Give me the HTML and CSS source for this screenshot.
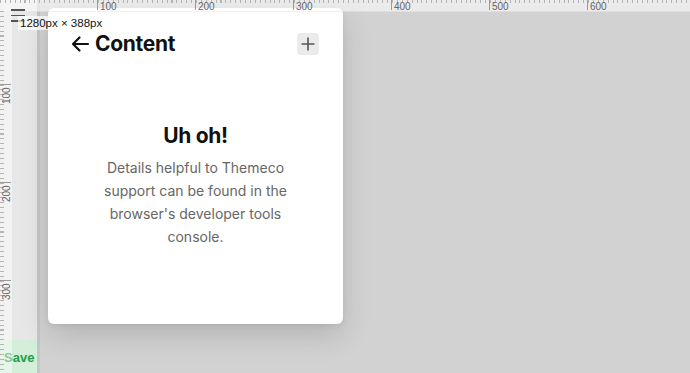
FILE: index.html
```html
<!DOCTYPE html>
<html lang="en">
<head>
    <meta charset="UTF-8">
    <meta name="viewport" content="width=device-width, initial-scale=1.0">
    <title>Content</title>
    <link rel="stylesheet" href="styles.css">
</head>
<body>
    <div class="sidebar">
        <div class="save">Save</div>
    </div>

    <div class="canvas">
        <div class="card">
            <div class="card-header">
                <h1 class="card-title">
                    <svg class="back" width="20" height="18" viewBox="0 0 20 18">
                        <path d="M18 9H3M9.5 2.5L3 9l6.5 6.5" fill="none" stroke="#111" stroke-width="2.2" stroke-linecap="round" stroke-linejoin="round"/>
                    </svg>
                    Content
                </h1>
                <button class="add-btn" aria-label="Add">
                    <svg width="14" height="14" viewBox="0 0 14 14">
                        <path d="M7 0.5v13M0.5 7h13" stroke="#555" stroke-width="1.6"/>
                    </svg>
                </button>
            </div>

            <div class="error">
                <h2>Uh oh!</h2>
                <p>Details helpful to Themeco support can be found in the browser's developer tools console.</p>
            </div>
        </div>
    </div>

    <!-- rulers sit over everything -->
    <div class="ruler-top">
        <span style="left: 97px">100</span>
        <span style="left: 195px">200</span>
        <span style="left: 293px">300</span>
        <span style="left: 391px">400</span>
        <span style="left: 489px">500</span>
        <span style="left: 587px">600</span>
    </div>
    <div class="ruler-left">
        <span style="top: 92px">100</span>
        <span style="top: 190px">200</span>
        <span style="top: 288px">300</span>
    </div>

    <div class="menu-icon">
        <i></i><i></i><i></i>
    </div>
    <div class="size-label">1280px × 388px</div>
</body>
</html>
```

FILE: styles.css
```css
body {
    margin: 0;
    height: 373px;
    overflow: hidden;
    display: flex;
    font-family: Inter, 'Liberation Sans', sans-serif;
    background-color: #d2d2d2;
}

.sidebar {
    width: 37px;
    flex-shrink: 0;
    background-color: #e7e7e7;
    border-right: 3px solid #c6c6c6;
    display: flex;
    flex-direction: column;
    justify-content: flex-end;
}

.save {
    height: 33px;
    background-color: #d3efda;
    color: #1e9e46;
    font-family: 'Liberation Sans', sans-serif;
    font-weight: bold;
    font-size: 13px;
    line-height: 36px;
    padding-left: 4px;
}

.canvas {
    flex: 1;
    padding: 8px 0 0 8px;
    background-color: #d2d2d2;
}

.card {
    width: 295px;
    height: 316px;
    background-color: white;
    border-radius: 6px;
    box-shadow: 0 12px 30px rgba(0, 0, 0, 0.14), 0 2px 6px rgba(0, 0, 0, 0.06);
    box-sizing: border-box;
    padding: 24px 24px 0 22px;
}

.card-header {
    display: flex;
    align-items: center;
    justify-content: space-between;
}

.card-title {
    margin: 0;
    display: flex;
    align-items: center;
    gap: 5px;
    font-size: 21px;
    line-height: 24px;
    font-weight: 700;
    color: #111;
    letter-spacing: -0.3px;
}

.add-btn {
    width: 22px;
    height: 22px;
    padding: 0;
    border: none;
    border-radius: 4px;
    background-color: #ebebeb;
    display: flex;
    align-items: center;
    justify-content: center;
}

.error {
    text-align: center;
    margin-top: 67px;
    padding-left: 2px;
}

.error h2 {
    margin: 0 0 8px;
    font-size: 21px;
    font-weight: 700;
    color: #111;
    letter-spacing: -0.3px;
}

.error p {
    margin: 0 auto;
    width: 190px;
    font-size: 14px;
    line-height: 23px;
    color: #666;
}

/* rulers */
.ruler-top {
    position: absolute;
    top: 0;
    left: 0;
    right: 0;
    height: 11px;
    background-color: rgba(255, 255, 255, 0.55);
    border-bottom: 1px solid rgba(0, 0, 0, 0.05);
    background-image: repeating-linear-gradient(to right, #b4b4b4 0 1px, transparent 1px 4.9px);
    background-size: 100% 3px;
    background-repeat: no-repeat;
}

.ruler-top span {
    position: absolute;
    top: 0;
    height: 10px;
    border-left: 1px solid #999;
    padding-left: 2px;
    font-family: 'Liberation Sans', sans-serif;
    font-size: 10px;
    line-height: 13px;
    color: #666;
}

.ruler-left {
    position: absolute;
    top: 11px;
    left: 0;
    bottom: 0;
    width: 12px;
    background-color: rgba(255, 255, 255, 0.45);
    background-image: repeating-linear-gradient(to bottom, #b4b4b4 0 1px, transparent 1px 4.9px);
    background-size: 4px 100%;
    background-repeat: no-repeat;
}

.ruler-left span {
    position: absolute;
    left: 0;
    width: 11px;
    border-bottom: 1px solid #999;
    font-family: 'Liberation Sans', sans-serif;
    font-size: 10px;
    color: #666;
    writing-mode: vertical-rl;
    transform: rotate(180deg);
    margin-top: -19px;
    height: 19px;
    line-height: 13px;
    text-align: left;
}

.menu-icon {
    position: absolute;
    top: 9px;
    left: 11px;
    width: 14px;
    display: flex;
    flex-direction: column;
    gap: 4px;
}

.menu-icon i {
    display: block;
    height: 1.5px;
    background-color: #555;
}

.size-label {
    position: absolute;
    top: 16px;
    left: 18px;
    padding: 0 2px;
    background-color: rgba(255, 255, 255, 0.7);
    font-family: 'Liberation Sans', sans-serif;
    font-size: 11.5px;
    line-height: 14px;
    color: #111;
}
```
